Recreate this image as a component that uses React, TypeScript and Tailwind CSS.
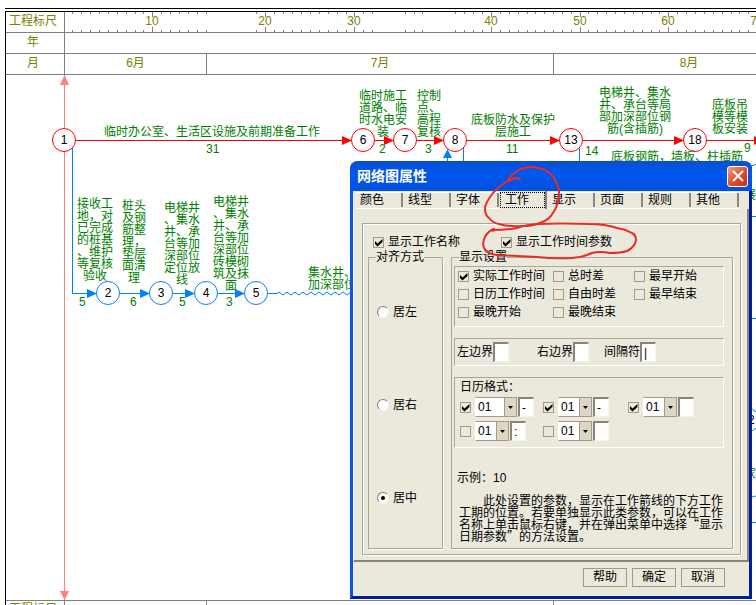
import React from 'react';

const topTicks = [
  72, 81, 90, 99, 108, 117, 126, 135, 143, 152, 161, 170, 179, 188, 197, 206, 256, 265, 274, 283, 292, 301, 310, 319,
  328, 337, 346, 354, 363, 372, 405, 414, 422, 455, 464, 473, 482, 491, 500, 509, 518, 527, 535, 544, 553, 562, 571,
  580, 588, 597, 606, 615, 624, 633, 642, 651, 659, 668, 677, 686, 695, 704, 713, 722, 731, 739, 748,
];

const scaleMarks = [
  { x: 152, value: '10' },
  { x: 265, value: '20' },
  { x: 354, value: '30' },
  { x: 491, value: '40' },
  { x: 580, value: '50' },
  { x: 668, value: '60' },
  { x: 757, value: '70' },
];

const nodes = [
  { id: '1', x: 64, y: 140, color: '#ff0000' },
  { id: '6', x: 363, y: 140, color: '#ff0000' },
  { id: '7', x: 405, y: 140, color: '#ff0000' },
  { id: '8', x: 455, y: 140, color: '#ff0000' },
  { id: '13', x: 571, y: 140, color: '#ff0000' },
  { id: '18', x: 695, y: 140, color: '#ff0000' },
  { id: '2', x: 108, y: 293, color: '#0080ff' },
  { id: '3', x: 161, y: 293, color: '#0080ff' },
  { id: '4', x: 206, y: 293, color: '#0080ff' },
  { id: '5', x: 256, y: 293, color: '#0080ff' },
  { id: '12', x: 748, y: 420, color: '#0080ff' },
];

const arrows = [
  { from: 76, to: 352, y: 140, color: '#ff0000' },
  { from: 375, to: 394, y: 140, color: '#ff0000' },
  { from: 417, to: 444, y: 140, color: '#ff0000' },
  { from: 467, to: 560, y: 140, color: '#ff0000' },
  { from: 583, to: 684, y: 140, color: '#ff0000' },
  { from: 707, to: 764, y: 140, color: '#ff0000' },
  { from: 72, to: 97, y: 293, color: '#0080ff' },
  { from: 120, to: 150, y: 293, color: '#0080ff' },
  { from: 173, to: 195, y: 293, color: '#0080ff' },
  { from: 218, to: 245, y: 293, color: '#0080ff' },
];

const tasks = [
  { x: 104, y: 126, text: '临时办公室、生活区设施及前期准备工作' },
  { x: 359, y: 90, text: '临时施工\n道路、临\n时水电安\n装' },
  { x: 417, y: 90, text: '控制\n点、\n高程\n复核' },
  { x: 471, y: 114, text: '底板防水及保护\n层施工' },
  { x: 599, y: 87, text: '电梯井、集水\n井、承台等局\n部加深部位钢\n筋(含插筋)' },
  { x: 712, y: 99, text: '底板吊\n模等模\n板安装' },
  { x: 611, y: 151, text: '底板钢筋，墙板、柱插筋' },
  { x: 77, y: 198, text: '接收工\n地，对\n已完成\n的桩基\n、维护\n等复核\n验收' },
  { x: 122, y: 200, text: '桩头\n及钢\n筋整\n理，\n垫层\n面清\n理' },
  { x: 164, y: 202, text: '电梯井\n、集水\n井、承\n台等加\n深部位\n定位放\n线' },
  { x: 213, y: 196, text: '电梯井\n、集水\n井、承\n台等加\n深部位\n砖模砌\n筑及抹\n面' },
  { x: 308, y: 267, text: '集水井、\n加深部位' },
  { x: 744, y: 189, text: '展' },
  { x: 744, y: 468, text: '家' },
];

const durations = [
  { x: 206, y: 143, text: '31' },
  { x: 379, y: 143, text: '2' },
  { x: 425, y: 143, text: '3' },
  { x: 506, y: 143, text: '11' },
  { x: 585, y: 145, text: '14' },
  { x: 744, y: 142, text: '9' },
  { x: 79, y: 296, text: '5' },
  { x: 130, y: 296, text: '6' },
  { x: 179, y: 296, text: '5' },
  { x: 226, y: 296, text: '3' },
];

const tabs = ['颜色', '线型', '字体', '工作', '显示', '页面', '规则', '其他'];

const displayOptions = [
  { label: '实际工作时间', checked: true },
  { label: '总时差', checked: false },
  { label: '最早开始', checked: false },
  { label: '日历工作时间', checked: false },
  { label: '自由时差', checked: false },
  { label: '最早结束', checked: false },
  { label: '最晚开始', checked: false },
  { label: '最晚结束', checked: false },
];

// canvas origin inside the page frame
const OX = 6;
const OY = 75;

const Ruler: React.FC = () => (
  <div className="relative flex-1 overflow-hidden">
    <svg className="absolute inset-0 h-full w-full" shapeRendering="crispEdges">
      {topTicks.map((x) => {
        const len = scaleMarks.some((m) => m.x === x) ? 5 : 2;
        return (
          <path key={x} d={`M${x - 64.5} 0v${len}M${x - 64.5} 20v${-len}`} stroke="#808080" fill="none" />
        );
      })}
    </svg>
    {scaleMarks.map((m) => (
      <span key={m.value} className="absolute top-[3px] -translate-x-1/2 leading-3" style={{ left: m.x - 65 }}>
        {m.value}
      </span>
    ))}
  </div>
);

const Diagram: React.FC = () => (
  <div className="relative flex-1 overflow-hidden">
    <svg className="absolute inset-0 h-full w-full">
      <g transform={`translate(${-OX} ${-OY})`} fill="none">
        <path d="M64.5 75V600" stroke="#ff8080" />
        <path d="M64.5 75l4.5 10h-9zM64.5 600l-4.5 -9h9z" fill="#ff8080" />
        <g stroke="#0080ff">
          <path d="M72.5 148V293M447.5 150V165M463.5 148V165M579.5 148V165" />
          <path d="M447.5 149l4.5 9h-9z" fill="#0080ff" stroke="none" />
          <path d="M268 293.5h9q2 -3 4 0t4 0t4 0t4 0t4 0t4 0t4 0t4 0t4 0t4 0t4 0t4 0t4 0t4 0t4 0t4 0t4 0t4 0t4 0" />
          <path d="M750 166.5l8 -3M750 216.5h8M750 318.5h8M750 497.5l8 -2M750 522.5h8" />
        </g>
        {arrows.map((a) => (
          <g key={`${a.from}-${a.y}`}>
            <path d={`M${a.from} ${a.y + 0.5}H${a.to - 2}`} stroke={a.color} />
            <path d={`M${a.to} ${a.y + 0.5}l-10 -4.5v9z`} fill={a.color} />
          </g>
        ))}
        {nodes.map((n) => (
          <g key={n.id}>
            <circle cx={n.x} cy={n.y} r="11.5" fill="#fff" stroke={n.color} />
            <text x={n.x} y={n.y + 4} textAnchor="middle" fill="#000">
              {n.id}
            </text>
          </g>
        ))}
      </g>
    </svg>
    {[...tasks, ...durations].map((t) => (
      <p
        key={`${t.x}-${t.y}`}
        className="absolute text-center leading-3 whitespace-pre text-[#008000]"
        style={{ left: t.x - OX, top: t.y - OY }}
      >
        {t.text}
      </p>
    ))}
  </div>
);

interface CheckProps {
  label?: string;
  name?: string;
  checked?: boolean;
}

const Check: React.FC<CheckProps> = ({ label, name, checked }) => (
  <label className="flex items-center gap-1">
    <span className="grid shrink-0">
      <input
        type="checkbox"
        aria-label={name}
        defaultChecked={checked}
        className="peer col-start-1 row-start-1 size-[11px] appearance-none border border-[#a89888]"
      />
      <svg
        viewBox="0 0 11 11"
        className="pointer-events-none invisible col-start-1 row-start-1 size-[11px] peer-checked:visible"
      >
        <path d="M2 4v3l2.5 2.5L9.5 5V2L4.5 6.5z" fill="#000" />
      </svg>
    </span>
    {label && <span className="whitespace-nowrap">{label}</span>}
  </label>
);

const Align: React.FC<{ label: string; checked?: boolean }> = ({ label, checked }) => (
  <label className="flex items-center gap-1">
    <span className="grid place-items-center">
      <input
        type="radio"
        name="align"
        defaultChecked={checked}
        className="peer col-start-1 row-start-1 size-3 appearance-none rounded-full border border-t-[#808080] border-r-[#f4f2ea] border-b-[#f4f2ea] border-l-[#808080] bg-white"
      />
      <i className="pointer-events-none invisible col-start-1 row-start-1 size-1 rounded-full bg-black peer-checked:visible" />
    </span>
    {label}
  </label>
);

const SmallInput: React.FC<{ name?: string; id?: string; value?: string }> = ({ name, id, value }) => (
  <input
    id={id}
    aria-label={name}
    defaultValue={value}
    className="h-5 w-4 border border-t-2 border-l-2 border-t-[#8a8578] border-r-[#f6f4ec] border-b-[#f6f4ec] border-l-[#8a8578] bg-white pl-0.5 leading-3 outline-none"
  />
);

const Edge: React.FC<{ id: string; label: string; value?: string }> = ({ id, label, value }) => (
  <div className="flex items-center">
    <label htmlFor={id}>{label}</label>
    <SmallInput id={id} value={value} />
  </div>
);

const DatePart: React.FC<{ name: string; sep?: string; checked?: boolean; wide?: boolean }> = ({
  name,
  sep,
  checked,
  wide,
}) => (
  <div className="flex items-center">
    <Check name={name} checked={checked} />
    <div className="mr-px ml-1 grid">
      <select
        aria-label={`${name}格式`}
        className={`col-start-1 row-start-1 h-5 appearance-none border border-[#a89888] border-l-white bg-white pl-0.5 leading-3 ${
          wide ? 'w-[42px]' : 'w-[34px]'
        }`}
      >
        <option>01</option>
      </select>
      <span className="pointer-events-none col-start-1 row-start-1 flex h-5 w-[13px] items-center justify-center justify-self-end border border-[#a89888] bg-[#dcd6c4]">
        <svg viewBox="0 0 5 3" className="h-[3px] w-[5px]">
          <path d="M0 0h5L2.5 3z" fill="#000" />
        </svg>
      </span>
    </div>
    <SmallInput name={`${name}分隔符`} value={sep} />
  </div>
);

const Dialog: React.FC = () => (
  <section
    role="dialog"
    aria-label="网络图属性"
    className="absolute top-[161px] left-[350px] flex h-[438px] w-[402px] flex-col rounded-t-lg border-x-[3px] border-b-[3px] border-[#0831d9] border-r-[#001ea0] border-b-[#001ea0] border-l-[#0855e8] bg-[#ebe9dc]"
  >
    <header className="-mx-[3px] flex h-[30px] items-center justify-between rounded-t-lg bg-linear-to-b from-[#0a4fd0] via-[#0058ee] via-40% to-[#0050e0] pr-1 pl-[7px]">
      <h1 className="text-sm leading-4 font-bold text-white">网络图属性</h1>
      <button
        aria-label="关闭"
        className="flex size-[21px] items-center justify-center rounded-[3px] border border-white bg-linear-to-br from-[#f0a088] via-[#e05030] to-[#c03010]"
      >
        <svg viewBox="0 0 12 12" className="size-3">
          <path d="M1 1l10 10M11 1L1 11" stroke="#fff" strokeWidth="2" />
        </svg>
      </button>
    </header>

    <nav role="tablist" className="flex h-[18px] shrink-0 items-end pl-0.5">
      {tabs.map((tab) =>
        tab === '工作' ? (
          <button
            key={tab}
            role="tab"
            aria-selected
            className="flex h-[18px] w-12 border-r-2 border-[#808080] pt-px pl-px"
          >
            <span className="h-4 w-[45px] border border-dotted border-black pl-1 text-left leading-[14px]">{tab}</span>
          </button>
        ) : (
          <button
            key={tab}
            role="tab"
            className="flex h-[17px] w-12 rounded-tl-sm border-t border-b border-white pl-1"
          >
            <span className="h-[14px] flex-1 border-r-2 border-[#8a8578] pl-px text-left leading-[14px]">{tab}</span>
          </button>
        )
      )}
    </nav>

    <div className="flex flex-1 flex-col border-r-2 border-b-2 border-l border-[#8a8578] border-l-white pt-[14px] pr-[6px] pb-[5px] pl-2">
      <div className="flex flex-1 flex-col border border-[#aca899] pt-[10px] pr-[7px] pb-[5px] pl-[5px] shadow-[1px_1px_0_#fff,inset_1px_1px_0_#fff]">
        <div className="flex h-4 shrink-0 items-center pl-[5px]">
          <div className="w-32">
            <Check label="显示工作名称" checked />
          </div>
          <Check label="显示工作时间参数" checked />
        </div>

        <div className="mt-px flex flex-1 gap-2">
          <fieldset className="w-[75px] border border-[#aca899] shadow-[1px_1px_0_#fff]">
            <legend className="ml-[7px] leading-3">对齐方式</legend>
            <div className="flex h-full flex-col justify-between pt-[41px] pb-[42px] pl-2">
              <Align label="居左" />
              <Align label="居右" />
              <Align label="居中" checked />
            </div>
          </fieldset>

          <fieldset className="flex-1 border border-[#aca899] pr-2 pl-0.5 shadow-[1px_1px_0_#fff]">
            <legend className="ml-[5px] leading-3">显示设置</legend>
            <div className="mt-[3px] grid h-[61px] grid-cols-[95px_81px_1fr] content-start border border-[#aca899] border-r-white border-b-white pl-[3px]">
              {displayOptions.map((o) => (
                <div key={o.label} className="flex h-[18px] items-center">
                  <Check label={o.label} checked={o.checked} />
                </div>
              ))}
            </div>

            <div className="mt-[11px] flex h-7 items-center border border-[#aca899] border-r-white border-b-white pl-0.5">
              <div className="w-20">
                <Edge id="left-edge" label="左边界" />
              </div>
              <div className="w-[67px]">
                <Edge id="right-edge" label="右边界" />
              </div>
              <Edge id="divider" label="间隔符" value="|" />
            </div>

            <div className="mt-[11px] h-[71px] border border-[#aca899] border-r-white border-b-white pt-[3px] pl-[5px]">
              <p className="leading-3">日历格式：</p>
              <div className="mt-1 grid grid-cols-[83px_85px_1fr] gap-y-1">
                <DatePart name="年" sep="-" checked wide />
                <DatePart name="月" sep="-" checked />
                <DatePart name="日" checked />
                <DatePart name="时" sep=":" />
                <DatePart name="分" />
              </div>
            </div>

            <p className="mt-6 ml-[3px] leading-3">示例：10</p>
            <p className="mt-[10px] ml-[5px] indent-6 font-['Noto_Sans_CJK_SC',sans-serif] leading-3 whitespace-pre">
              {'此处设置的参数，显示在工作箭线的下方工作\n工期的位置。若要单独显示此类参数，可以在工作\n名称上单击鼠标右键，并在弹出菜单中选择“显示\n日期参数”的方法设置。'}
            </p>
          </fieldset>
        </div>
      </div>
    </div>

    <footer className="flex h-[34px] shrink-0 items-center justify-end gap-[5px] pr-6 pb-1">
      {['帮助', '确定', '取消'].map((b) => (
        <button key={b} className="h-[19px] w-11 border border-[#a89888] leading-3">
          {b}
        </button>
      ))}
    </footer>
  </section>
);

const PenMarks: React.FC = () => (
  <svg className="pointer-events-none absolute top-40 left-[480px] h-[105px] w-40" viewBox="480 160 160 105">
    <g fill="none" stroke="#ee2a24" strokeWidth="2" strokeLinecap="round" strokeLinejoin="round">
      <path d="M520 179l-5 -1l-7 3q-9 5 -15 12q-8 10 -8 16q0 6 4 9q4 5 10 6q10 3 24 2q10 0 17 -3q9 -3 13 -10q6 -9 6 -19q0 -7 -3 -12q-3 -7 -8 -10q-6 -4 -15 -5q-9 0 -16 4q-5 3 -9 9" />
      <path d="M494 229q-6 2 -9 8q-3 6 -1 11q3 6 13 7l40 2q18 2 35 1q12 -1 20 -5q8 -2 18 0q11 0 17 -2q8 -4 9 -11q0 -5 -4 -7q-7 -4 -15 -5q-12 -4 -27 -4q-30 -1 -53 0q-12 1 -20 4q-12 2 -23 2q-2 -2 -1 1" />
    </g>
  </svg>
);

const App: React.FC = () => (
  <main className="relative flex h-screen flex-col overflow-hidden bg-white pt-2 pl-[5px] font-['Liberation_Sans','Noto_Sans_CJK_SC',sans-serif] text-xs text-black">
    <div className="h-[3px] shrink-0 border-t border-black" />
    <div className="flex flex-1 flex-col border-t border-l border-black">
      <div className="shrink-0 overflow-hidden text-center text-[#808000]">
        <div className="flex h-[21px] border-b border-[#808080]">
          <div className="w-[59px] shrink-0 border-r border-[#808080] pr-1 leading-[18px]">工程标尺</div>
          <Ruler />
        </div>
        <div className="flex h-[21px] border-b border-[#808080]">
          <div className="w-[59px] shrink-0 border-r border-[#808080] pr-1 leading-[18px]">年</div>
        </div>
        <div className="flex h-[21px] border-b border-[#808080] leading-[18px]">
          <div className="w-[59px] shrink-0 border-r border-[#808080] pr-1">月</div>
          <div className="w-[142px] shrink-0 border-r border-[#808080]">6月</div>
          <div className="w-[347px] shrink-0 border-r border-[#808080]">7月</div>
          <div className="w-[270px] shrink-0">8月</div>
        </div>
      </div>
      <Diagram />
      <div className="flex h-[5px] shrink-0 overflow-hidden border-t border-[#808080] text-[#808000]">
        <div className="w-[59px] shrink-0 border-r border-[#808080] pt-0.5 pr-1 text-center leading-3">工程标尺</div>
        <div className="w-[142px] shrink-0 border-r border-[#808080]" />
        <div className="w-[347px] shrink-0 border-r border-[#808080]" />
      </div>
    </div>
    <Dialog />
    <PenMarks />
  </main>
);

export default App;
